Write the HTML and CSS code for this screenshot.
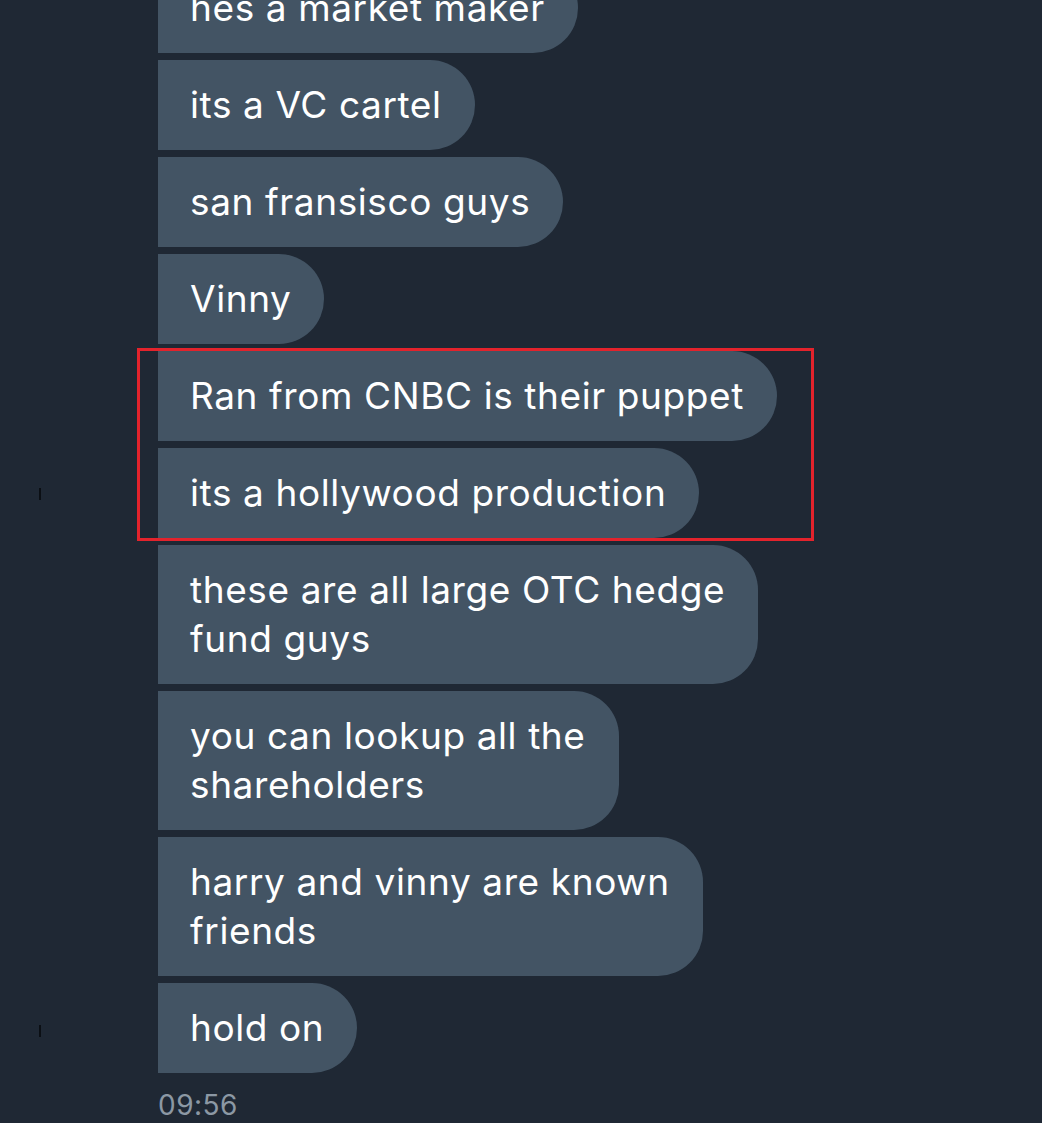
FILE: index.html
```html
<!DOCTYPE html>
<html lang="en">
<head>
  <meta charset="UTF-8">
  <title>Chat</title>
  <link rel="stylesheet" href="styles.css">
</head>
<body>

<div class="chat">
  <div class="marks">
    <span class="mark mark-top"></span>
    <span class="mark mark-bottom"></span>
  </div>

  <div class="messages">
    <div class="bubble">hes a market maker</div>
    <div class="bubble">its a VC cartel</div>
    <div class="bubble">san fransisco guys</div>
    <div class="bubble">Vinny</div>
    <div class="highlight-group">
      <div class="bubble">Ran from CNBC is their puppet</div>
      <div class="bubble">its a hollywood production</div>
      <div class="highlight"></div>
    </div>
    <div class="bubble">these are all large OTC hedge<br>fund guys</div>
    <div class="bubble">you can lookup all the<br>shareholders</div>
    <div class="bubble">harry and vinny are known<br>friends</div>
    <div class="bubble">hold on</div>
    <div class="time">09:56</div>
  </div>
</div>

</body>
</html>
```

FILE: styles.css
```css
html, body {
  margin: 0;
  height: 100%;
  overflow: hidden;
}
body {
  background-color: #1f2834;
  font-family: Inter, "Noto Sans", sans-serif;
  color: #fff;
}
.chat {
  display: flex;
  position: relative;
}
.marks {
  width: 158px;
  position: relative;
}
.mark {
  position: absolute;
  left: 39px;
  width: 2px;
  height: 12px;
  background-color: #0b0f14;
}
.mark-top {
  top: 488px;
}
.mark-bottom {
  top: 1025px;
}
.messages {
  display: flex;
  flex-direction: column;
  align-items: flex-start;
  gap: 7px;
  margin-top: -37px;
}
.highlight-group {
  display: flex;
  flex-direction: column;
  align-items: flex-start;
  gap: 7px;
  position: relative;
}
.bubble {
  background-color: #435464;
  padding: 20px 33px 21px 32px;
  font-size: 37px;
  line-height: 49px;
  letter-spacing: 0.6px;
  border-radius: 0 45px 45px 0;
  white-space: nowrap;
}
.bubble-wide {
  letter-spacing: 0.8px;
}
.highlight {
  position: absolute;
  left: -21px;
  top: -3px;
  width: 671px;
  height: 187px;
  border: 3px solid #e3232c;
}
.time {
  margin-top: 8px;
  font-size: 28px;
  line-height: 34px;
  letter-spacing: 0.5px;
  color: #8c98a4;
}
```
